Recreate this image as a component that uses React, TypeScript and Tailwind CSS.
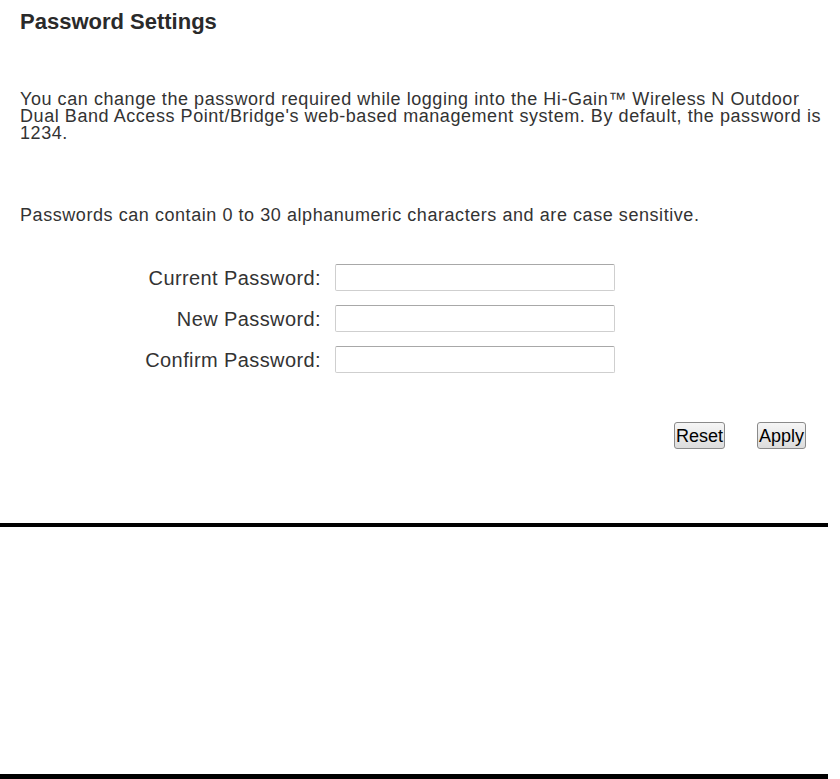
import React from 'react'

const fields = ['Current Password:', 'New Password:', 'Confirm Password:']

const Btn: React.FC<{ children: React.ReactNode }> = ({ children }) => (
  <button className="h-[27px] px-[1px] text-[18px] leading-none text-black border border-[#8a8a8a] rounded-[3px] bg-gradient-to-b from-[#f6f6f6] to-[#dcdcdc]">
    {children}
  </button>
)

export default function App() {
  return (
    <div className="w-[840px] h-[779px] bg-white text-[#333] font-['Liberation_Sans',Arial,sans-serif] flex flex-col">
      <div className="w-[828px] h-[527px] flex flex-col border-b-4 border-black">
        <h1 className="pl-[20px] pt-[9px] text-[22px] leading-[26px] font-bold text-[#2a2a2a]">
          Password Settings
        </h1>

        <p className="pl-[20px] mt-[56px] text-[18px] leading-[17px] tracking-[0.56px]">
          You can change the password required while logging into the Hi-Gain™ Wireless N Outdoor Dual Band Access Point/Bridge's web-based management system. By default, the password is 1234.
        </p>

        <p className="pl-[20px] mt-[65px] text-[18px] leading-[17px] tracking-[0.56px]">
          Passwords can contain 0 to 30 alphanumeric characters and are case sensitive.
        </p>

        <div className="mt-[40px] flex flex-col gap-[14px]">
          {fields.map((f) => (
            <div key={f} className="flex items-center">
              <label className="w-[322px] pr-[1px] text-right text-[20px] leading-none tracking-[0.4px]">{f}</label>
              <input
                type="password"
                className="ml-[13px] w-[280px] h-[27px] border border-[#cfcfcf] border-t-[#a8a8a8] rounded-[2px] bg-white"
              />
            </div>
          ))}
        </div>

        <div className="mt-[49px] flex justify-end gap-[32px] pr-[22px]">
          <Btn>Reset</Btn>
          <Btn>Apply</Btn>
        </div>
      </div>

      <div className="flex-1" />
      <div className="w-[828px] h-[5px] bg-black" />
    </div>
  )
}
